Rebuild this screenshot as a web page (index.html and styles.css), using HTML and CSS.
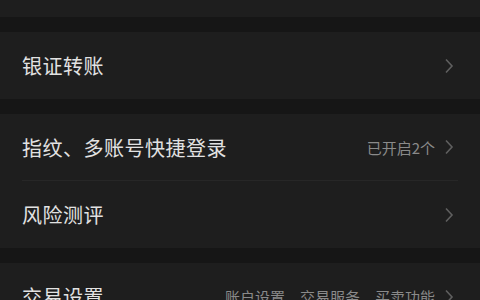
FILE: index.html
```html
<!DOCTYPE html>
<html lang="zh">
<head>
<meta charset="utf-8">
<link rel="stylesheet" href="styles.css">
</head>
<body>
<div class="page">
  <div class="card top"></div>
  <div class="card">
    <div class="row"><span class="label">银证转账</span><span class="right"><svg class="chev" viewBox="0 0 10 16"><path d="M2 1.5 L8 8 L2 14.5"/></svg></span></div>
  </div>
  <div class="card">
    <div class="row divided"><span class="label">指纹、多账号快捷登录</span><span class="right"><span class="sub">已开启2个</span><svg class="chev" viewBox="0 0 10 16"><path d="M2 1.5 L8 8 L2 14.5"/></svg></span></div>
    <div class="row"><span class="label">风险测评</span><span class="right"><svg class="chev" viewBox="0 0 10 16"><path d="M2 1.5 L8 8 L2 14.5"/></svg></span></div>
  </div>
  <div class="card">
    <div class="row"><span class="label">交易设置</span><span class="right"><span class="sub">账户设置、交易服务、买卖功能</span><svg class="chev" viewBox="0 0 10 16"><path d="M2 1.5 L8 8 L2 14.5"/></svg></span></div>
  </div>
</div>
</body>
</html>
```
FILE: styles.css
```css
html, body {
  margin: 0;
  padding: 0;
  background: #161616;
}
body {
  width: 480px;
  height: 300px;
  overflow: hidden;
  font-family: "Noto Sans CJK SC", "Noto Sans", sans-serif;
}
.page {
  display: flex;
  flex-direction: column;
  gap: 15px;
}
.card {
  background: #1e1e1e;
}
.card.top {
  height: 17px;
}
.row {
  height: 67px;
  margin: 0 22px;
  display: flex;
  align-items: center;
  justify-content: space-between;
  box-sizing: border-box;
}
.row.divided {
  border-bottom: 1px solid #272727;
}
.label {
  color: #e2e2e2;
  font-size: 20px;
  letter-spacing: 0.5px;
}
.right {
  display: flex;
  align-items: center;
  gap: 9px;
  margin-right: 4px;
}
.sub {
  color: #8a8a8a;
  font-size: 15px;
}
.chev {
  width: 10px;
  height: 16px;
  fill: none;
  stroke: #5f5f5f;
  stroke-width: 1.6;
}
```
